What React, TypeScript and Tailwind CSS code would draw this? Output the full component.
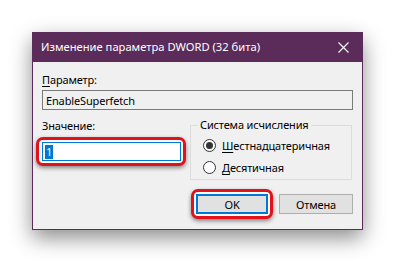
import { useState } from "react";

export default function App() {
  const [base, setBase] = useState<"hex" | "dec">("hex");

  return (
    <div
      className="w-[395px] h-[262px] bg-white pt-[32px] pl-[32px] overflow-hidden"
      style={{ fontFamily: '"Noto Sans", "DejaVu Sans", sans-serif' }}
    >
      {/* dialog window */}
      <div className="w-[331px] h-[198px] border border-[#5b2b5a] bg-[#f0f0f0] shadow-[0_8px_20px_rgba(0,0,0,0.45)] flex flex-col">
        {/* title bar */}
        <div className="h-[30px] -mt-px -mx-px bg-[#5b2b5a] flex items-center justify-between pl-[9px] pr-[11px] text-white text-[11.2px]">
          <span>Изменение параметра DWORD (32 бита)</span>
          <svg width="11" height="11" viewBox="0 0 11 11" className="mr-[3px]">
            <path d="M0.5 0.5 L10.5 10.5 M10.5 0.5 L0.5 10.5" stroke="#fff" strokeWidth="1.1" />
          </svg>
        </div>

        <div className="flex-1 px-[9px] text-[11px] tracking-[-0.15px] leading-[15px] text-black">
          <div className="mt-[10px] mb-[3px]">
            <span className="underline underline-offset-2">П</span>араметр:
          </div>
          <div className="h-[20px] border border-[#7a7a7a] bg-[#f0f0f0] flex items-center px-[3px]">
            EnableSuperfetch
          </div>

          <div className="flex mt-[8px]">
            {/* value */}
            <div className="w-[149px]">
              <div className="mb-[-2px]">Значение:</div>
              <div className="-ml-[6px] mt-[6px] w-[150px] h-[29px] border-[3px] border-[#e3121a] rounded-[7px] bg-white p-[2px] pl-[3px] shadow-[0_2px_4px_rgba(0,0,0,0.45)]">
                <div className="h-[19px] border border-[#0078d7] bg-white flex items-center px-[2px]">
                  <span className="bg-[#0078d7] text-white px-px leading-[14px]">1</span>
                </div>
              </div>
            </div>

            {/* number base group */}
            <fieldset className="ml-[-1px] w-[162px] h-[62px] border border-[#dcdcdc] pl-[12px] pr-[6px] pb-[2px]">
              <legend className="px-[2px] ml-[-5px] leading-[14px]">Система исчисления</legend>
              <label className="flex items-center gap-[6px] mt-[4px] h-[18px]" onClick={() => setBase("hex")}>
                <span className="w-[13px] h-[13px] rounded-full border border-[#333] bg-white flex items-center justify-center">
                  {base === "hex" && <span className="w-[7px] h-[7px] rounded-full bg-[#333]" />}
                </span>
                <span>
                  <span className="underline underline-offset-2">Ш</span>естнадцатеричная
                </span>
              </label>
              <label className="flex items-center gap-[6px] mt-[4px] h-[18px]" onClick={() => setBase("dec")}>
                <span className="w-[13px] h-[13px] rounded-full border border-[#333] bg-white flex items-center justify-center">
                  {base === "dec" && <span className="w-[7px] h-[7px] rounded-full bg-[#333]" />}
                </span>
                <span>
                  <span className="underline underline-offset-2">Д</span>есятичная
                </span>
              </label>
            </fieldset>
          </div>

          {/* buttons */}
          <div className="flex justify-end items-center mt-[9px] gap-[6px]">
            <div className="w-[82px] h-[30px] border-[3px] border-[#e3121a] rounded-[7px] bg-white p-[2px] shadow-[0_2px_4px_rgba(0,0,0,0.45)]">
              <button className="w-full h-full border-2 border-[#0078d7] bg-[#e1e1e1] text-[11px] leading-none">
                OK
              </button>
            </div>
            <button className="w-[74px] h-[20px] border border-[#adadad] bg-[#e1e1e1] text-[11px] leading-none">
              Отмена
            </button>
          </div>
        </div>
      </div>
    </div>
  );
}
